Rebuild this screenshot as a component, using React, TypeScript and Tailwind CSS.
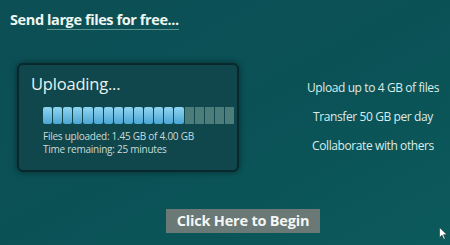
import React from "react"

const SEGMENTS = 19
const FILLED = 14

export default function App() {
  return (
    <main
      className="relative w-[450px] h-[245px] overflow-hidden bg-gradient-to-br from-[#0c4f55] via-[#0a5156] to-[#0c5a5c] text-white"
      style={{ fontFamily: '"Open Sans", "Noto Sans", sans-serif' }}
    >
      <h1 className="absolute left-[10px] top-[9px] text-[14.5px] font-bold tracking-[-0.4px] text-[#eef6f2]">
        Send <span className="border-b border-[#7fb0aa]/70">large files for free...</span>
      </h1>

      <div className="flex pt-[63px] pl-[17px]">
        {/* upload card */}
        <div className="w-[222px] h-[109px] rounded-[6px] border-2 border-[#08282c] bg-[#0f474c] shadow-[0_0_6px_rgba(0,0,0,0.45)] pl-[12px] pt-[8px]">
          <div className="text-[16.5px] leading-[22px] tracking-[-0.2px] text-[#e8f2ef]">Uploading...</div>
          <div className="mt-[12px] ml-[12px] flex gap-[1px] h-[17px] w-[191px]">
            {Array.from({ length: SEGMENTS }).map((_, i) => (
              <div
                key={i}
                className={
                  i < FILLED
                    ? "flex-1 rounded-[2px] bg-gradient-to-b from-[#8fd5f2] to-[#4aa6d4]"
                    : "flex-1 bg-[#4d7d7b]"
                }
              />
            ))}
          </div>
          <div className="ml-[12px] mt-[6px] text-[10px] leading-[13px] tracking-[-0.25px] text-[#c9dcda]">
            <div>Files uploaded: 1.45 GB of 4.00 GB</div>
            <div>Time remaining: 25 minutes</div>
          </div>
        </div>

        {/* features */}
        <div className="ml-[65px] mt-[17px] w-[138px] flex flex-col items-center gap-[13px] whitespace-nowrap text-[12px] leading-[16px] tracking-[-0.4px] text-[#dcece8]">
          <div>Upload up to 4 GB of files</div>
          <div>Transfer 50 GB per day</div>
          <div>Collaborate with others</div>
        </div>
      </div>

      <div className="mt-[36px] ml-[166px]">
        <button className="w-[154px] h-[24px] bg-[#6a7876] text-[14.5px] font-bold tracking-[-0.2px] text-[#f4f6f4] leading-[24px]">
          Click Here to Begin
        </button>
      </div>

      {/* mouse pointer */}
      <svg className="absolute left-[439px] top-[227px]" width="9" height="13" viewBox="0 0 9 13">
        <path d="M0.5 0.5 L0.5 10.5 L3 8.2 L4.8 12.3 L6.2 11.7 L4.5 7.7 L8 7.7 Z" fill="#ffffff" stroke="#1a3a3a" strokeWidth="0.6" />
      </svg>
    </main>
  )
}
